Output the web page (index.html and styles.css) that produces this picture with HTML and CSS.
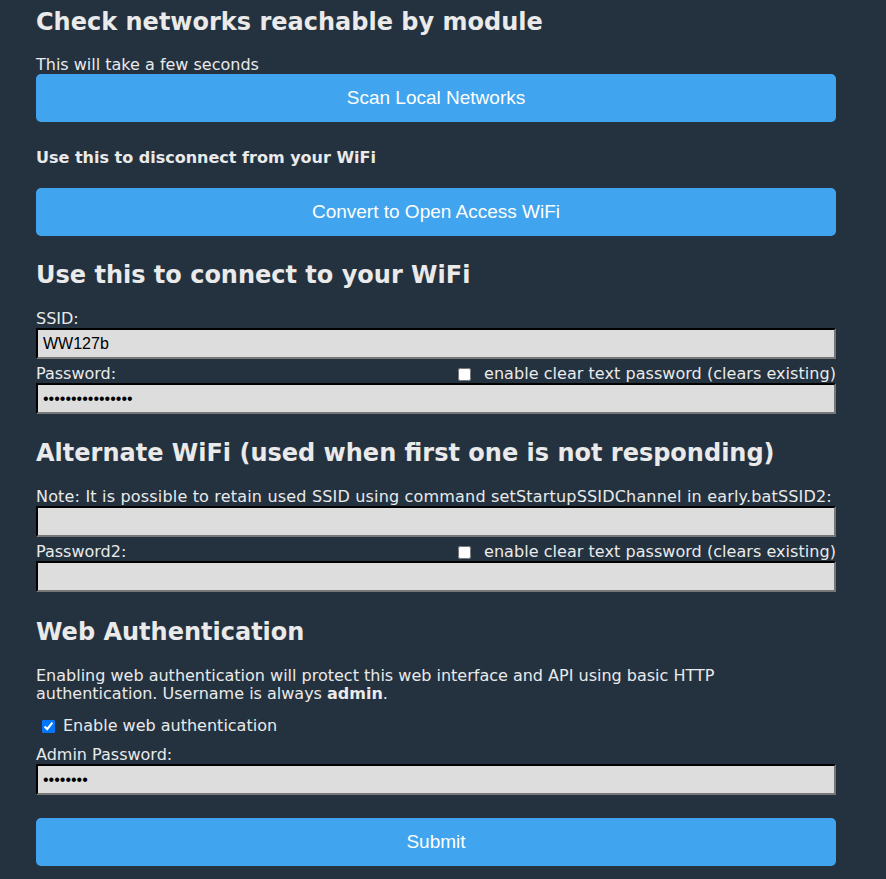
FILE: index.html
```html
<!DOCTYPE html>
<html>
<head>
    <title>WiFi Configuration</title>
    <link rel="stylesheet" href="styles.css">
</head>
<body>
    <div class="container">
        <h2 class="first">Check networks reachable by module</h2>
        <div class="note scan-note">This will take a few seconds</div>
        <button class="btn">Scan Local Networks</button>

        <h4>Use this to disconnect from your WiFi</h4>
        <button class="btn open-btn">Convert to Open Access WiFi</button>

        <h2>Use this to connect to your WiFi</h2>
        <form>
            <div class="label ssid-label">SSID:</div>
            <input type="text" class="field" value="WW127b">
            <div class="label row">
                <span>Password:</span>
                <span class="clear"><input type="checkbox">enable clear text password (clears existing)</span>
            </div>
            <input type="password" class="field" value="1234567890123456">

            <h2>Alternate WiFi (used when first one is not responding)</h2>
            <div class="label note-label">Note: It is possible to retain used SSID using command setStartupSSIDChannel in early.batSSID2:</div>
            <input type="text" class="field" value="">
            <div class="label row">
                <span>Password2:</span>
                <span class="clear"><input type="checkbox">enable clear text password (clears existing)</span>
            </div>
            <input type="password" class="field" value="">

            <h2 class="auth-title">Web Authentication</h2>
            <p class="auth-text">Enabling web authentication will protect this web interface and API using basic HTTP authentication. Username is always <b>admin</b>.</p>
            <div class="auth-check"><input type="checkbox" checked> Enable web authentication</div>
            <div class="label admin-label">Admin Password:</div>
            <input type="password" class="field" value="12345678">

            <button type="button" class="btn submit">Submit</button>
        </form>
    </div>
</body>
</html>
```

FILE: styles.css
```css
body {
    margin: 0;
    background-color: #243240;
    color: #eaeaea;
    font-family: "DejaVu Sans", Verdana, sans-serif;
    font-size: 16px;
}
.container {
    width: 800px;
    padding: 7px 0 20px 36px;
}
h2 {
    font-size: 24px;
    line-height: 30px;
    margin: 24px 0 0 0;
}
h2.first {
    margin-top: 0;
}
h4 {
    font-size: 16px;
    line-height: 18px;
    margin: 27px 0 0 0;
}
.note, .label {
    line-height: 18px;
}
.scan-note {
    margin-top: 19px;
}
.btn {
    display: block;
    width: 100%;
    height: 48px;
    border: 0;
    border-radius: 5px;
    background-color: #40a4ee;
    color: #fff;
    font-family: "Liberation Sans", Arial, sans-serif;
    font-size: 19px;
    cursor: pointer;
}
.open-btn {
    margin-top: 21px;
}
.field {
    display: block;
    box-sizing: border-box;
    width: 100%;
    height: 31px;
    margin: 0;
    padding: 0 5px;
    border: 2px inset #777;
    border-top-color: #222;
    border-left-color: #222;
    background-color: #ddd;
    color: #000;
    font-family: "Liberation Sans", Arial, sans-serif;
    font-size: 16px;
}
.ssid-label {
    margin-top: 20px;
}
.row {
    display: flex;
    justify-content: space-between;
    align-items: center;
    height: 18px;
    margin: 6px 0 0 0;
}
.clear {
    display: flex;
    align-items: center;
    letter-spacing: 0.05px;
}
.clear input {
    margin: 0 13px 0 0;
    width: 13px;
    height: 13px;
}
.note-label {
    margin-top: 20px;
    letter-spacing: 0.18px;
    white-space: nowrap;
}
.auth-title {
    margin-top: 25px;
}
.auth-text {
    margin: 20px 0 0 0;
    line-height: 18px;
}
.auth-check {
    display: flex;
    align-items: center;
    line-height: 18px;
    margin-top: 14px;
    padding-left: 6px;
}
.auth-check input {
    margin: 0 8px 0 0;
    width: 13px;
    height: 13px;
}
.admin-label {
    margin-top: 11px;
}
.submit {
    margin-top: 23px;
}
```
